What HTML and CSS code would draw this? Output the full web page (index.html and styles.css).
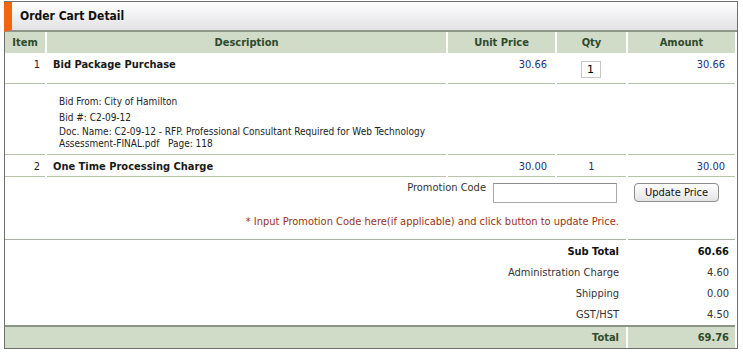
FILE: index.html
```html
<!DOCTYPE html>
<html lang="en">
<head>
    <meta charset="UTF-8">
    <title>Order Cart Detail</title>
    <link rel="stylesheet" href="styles.css">
</head>
<body>

<div class="cart">
    <div class="cart-title">Order Cart Detail</div>

    <table class="cart-table">
        <colgroup>
            <col class="col-item">
            <col class="col-desc">
            <col class="col-price">
            <col class="col-qty">
            <col class="col-amount">
        </colgroup>
        <thead>
            <tr>
                <th>Item</th>
                <th>Description</th>
                <th>Unit Price</th>
                <th>Qty</th>
                <th>Amount</th>
            </tr>
        </thead>
        <tbody>
            <tr class="line">
                <td class="num">1</td>
                <td class="desc">Bid Package Purchase</td>
                <td class="money">30.66</td>
                <td class="qty"><input class="qty-box" type="text" value="1"></td>
                <td class="money amount">30.66</td>
            </tr>
            <tr class="detail">
                <td></td>
                <td class="detail-text">
                    <div class="bid-from">Bid From: City of Hamilton</div>
                    <div class="bid-no">Bid #: C2-09-12</div>
                    <div class="doc-name">Doc. Name: C2-09-12 - RFP. Professional Consultant Required for Web Technology Assessment-FINAL.pdf&nbsp;&nbsp; Page: 118</div>
                </td>
                <td></td>
                <td></td>
                <td></td>
            </tr>
            <tr class="line short">
                <td class="num">2</td>
                <td class="desc">One Time Processing Charge</td>
                <td class="money">30.00</td>
                <td class="qty-plain">1</td>
                <td class="money amount">30.00</td>
            </tr>
            <tr class="promo">
                <td colspan="4">
                    <div class="promo-form">
                        <label for="promo">Promotion Code</label>
                        <input id="promo" class="promo-box" type="text">
                    </div>
                </td>
                <td><button class="btn-update">Update Price</button></td>
            </tr>
            <tr class="promo-note">
                <td colspan="4">* Input Promotion Code here(if applicable) and click button to update Price.</td>
                <td></td>
            </tr>
            <tr class="sum strong">
                <td colspan="4">Sub Total</td>
                <td>60.66</td>
            </tr>
            <tr class="sum">
                <td colspan="4">Administration Charge</td>
                <td>4.60</td>
            </tr>
            <tr class="sum">
                <td colspan="4">Shipping</td>
                <td>0.00</td>
            </tr>
            <tr class="sum">
                <td colspan="4">GST/HST</td>
                <td>4.50</td>
            </tr>
            <tr class="total-rule"><td colspan="5"></td></tr>
            <tr class="sum total">
                <td colspan="4">Total</td>
                <td>69.76</td>
            </tr>
        </tbody>
    </table>
</div>

</body>
</html>
```

FILE: styles.css
```css
body {
    margin: 0;
    background: #fff;
    font-family: "DejaVu Sans Condensed", "DejaVu Sans", sans-serif;
    font-size: 11px;
    color: #333;
}

.cart {
    margin: 1px 5px 0 4px;
    border: 1px solid #6f6f6f;
}

.cart-title {
    height: 28px;
    line-height: 28px;
    margin-left: -1px;
    padding-left: 8px;
    border-left: 8px solid #f0650e;
    border-bottom: 2px solid #8d9986;
    background: linear-gradient(#fefefe, #e2e2e6);
    font-size: 12px;
    font-weight: bold;
    color: #111;
}

.cart-table {
    border-collapse: separate;
    border-spacing: 2px 0;
    table-layout: fixed;
    margin-left: -2px;
    width: calc(100% + 2px);
}

.col-item { width: 40px; }
.col-desc { width: 399px; }
.col-price { width: 107px; }
.col-qty { width: 69px; }
.col-amount { width: 107px; }

th {
    height: 21px;
    padding: 0;
    background: #d0dbc8;
    color: #2f4a2c;
    font-weight: bold;
    text-align: center;
}

td {
    padding: 0;
    vertical-align: top;
    line-height: 13px;
}

.line td {
    padding-top: 5px;
    padding-bottom: 5px;
    border-bottom: 1px solid #b6c4aa;
}

.line.short td {
    padding-top: 5px;
    padding-bottom: 3px;
}

.num {
    text-align: right;
    padding-right: 5px;
    color: #222;
}

.desc {
    padding-left: 6px;
    font-weight: bold;
    color: #1a1a1a;
}

.money {
    text-align: right;
    padding-right: 8px;
    color: #252f78;
}

.money.amount {
    padding-right: 10px;
}

.qty, .qty-plain {
    text-align: center;
}

.qty-plain {
    color: #252f78;
}

.qty-box {
    width: 20px;
    height: 17px;
    margin: 3px 0 0 -2px;
    padding: 0;
    box-sizing: border-box;
    border: 1px solid #c6c6c6;
    font: 11px "DejaVu Sans", sans-serif;
    text-align: center;
    color: #000;
}

.detail td {
    padding-top: 12px;
    padding-bottom: 4px;
    border-bottom: 1px solid #b6c4aa;
}

.detail-text {
    padding-left: 12px;
    padding-right: 16px;
    font-size: 10px;
    line-height: 12px;
    color: #222;
}

.bid-no {
    margin-top: 4px;
}

.doc-name {
    margin-top: 2px;
}

.promo td {
    padding-top: 4px;
}

.promo-form {
    display: flex;
    justify-content: flex-end;
    align-items: flex-start;
    gap: 7px;
    padding-right: 9px;
}

.promo-form label {
    color: #333;
}

.promo-box {
    width: 124px;
    height: 20px;
    margin: 2px 0 0;
    padding: 0 3px;
    box-sizing: border-box;
    border: 1px solid #a9a9a9;
    border-top-color: #8e8e8e;
}

.btn-update {
    width: 85px;
    height: 19px;
    margin: 2px 0 0 6px;
    padding: 0;
    border: 1px solid #8c8c8c;
    border-radius: 4px;
    background: linear-gradient(#ffffff, #e4e4e4);
    font: 11px "DejaVu Sans Condensed", "DejaVu Sans", sans-serif;
    color: #111;
}

.promo-note td {
    padding: 12px 7px 11px 0;
    text-align: right;
    color: #9a3214;
    border-bottom: 1px solid #aab3a4;
}

.sum td {
    padding: 4px 0;
    text-align: right;
    padding-right: 7px;
}

.sum td + td {
    padding-right: 6px;
}

.sum.strong td {
    padding-top: 5px;
    font-weight: bold;
    color: #111;
}

.total-rule td {
    height: 2px;
    padding: 0;
    background: #8a9583;
}

.sum.total td {
    background: #d0dbc8;
    font-weight: bold;
    color: #2f4a2c;
}
```
